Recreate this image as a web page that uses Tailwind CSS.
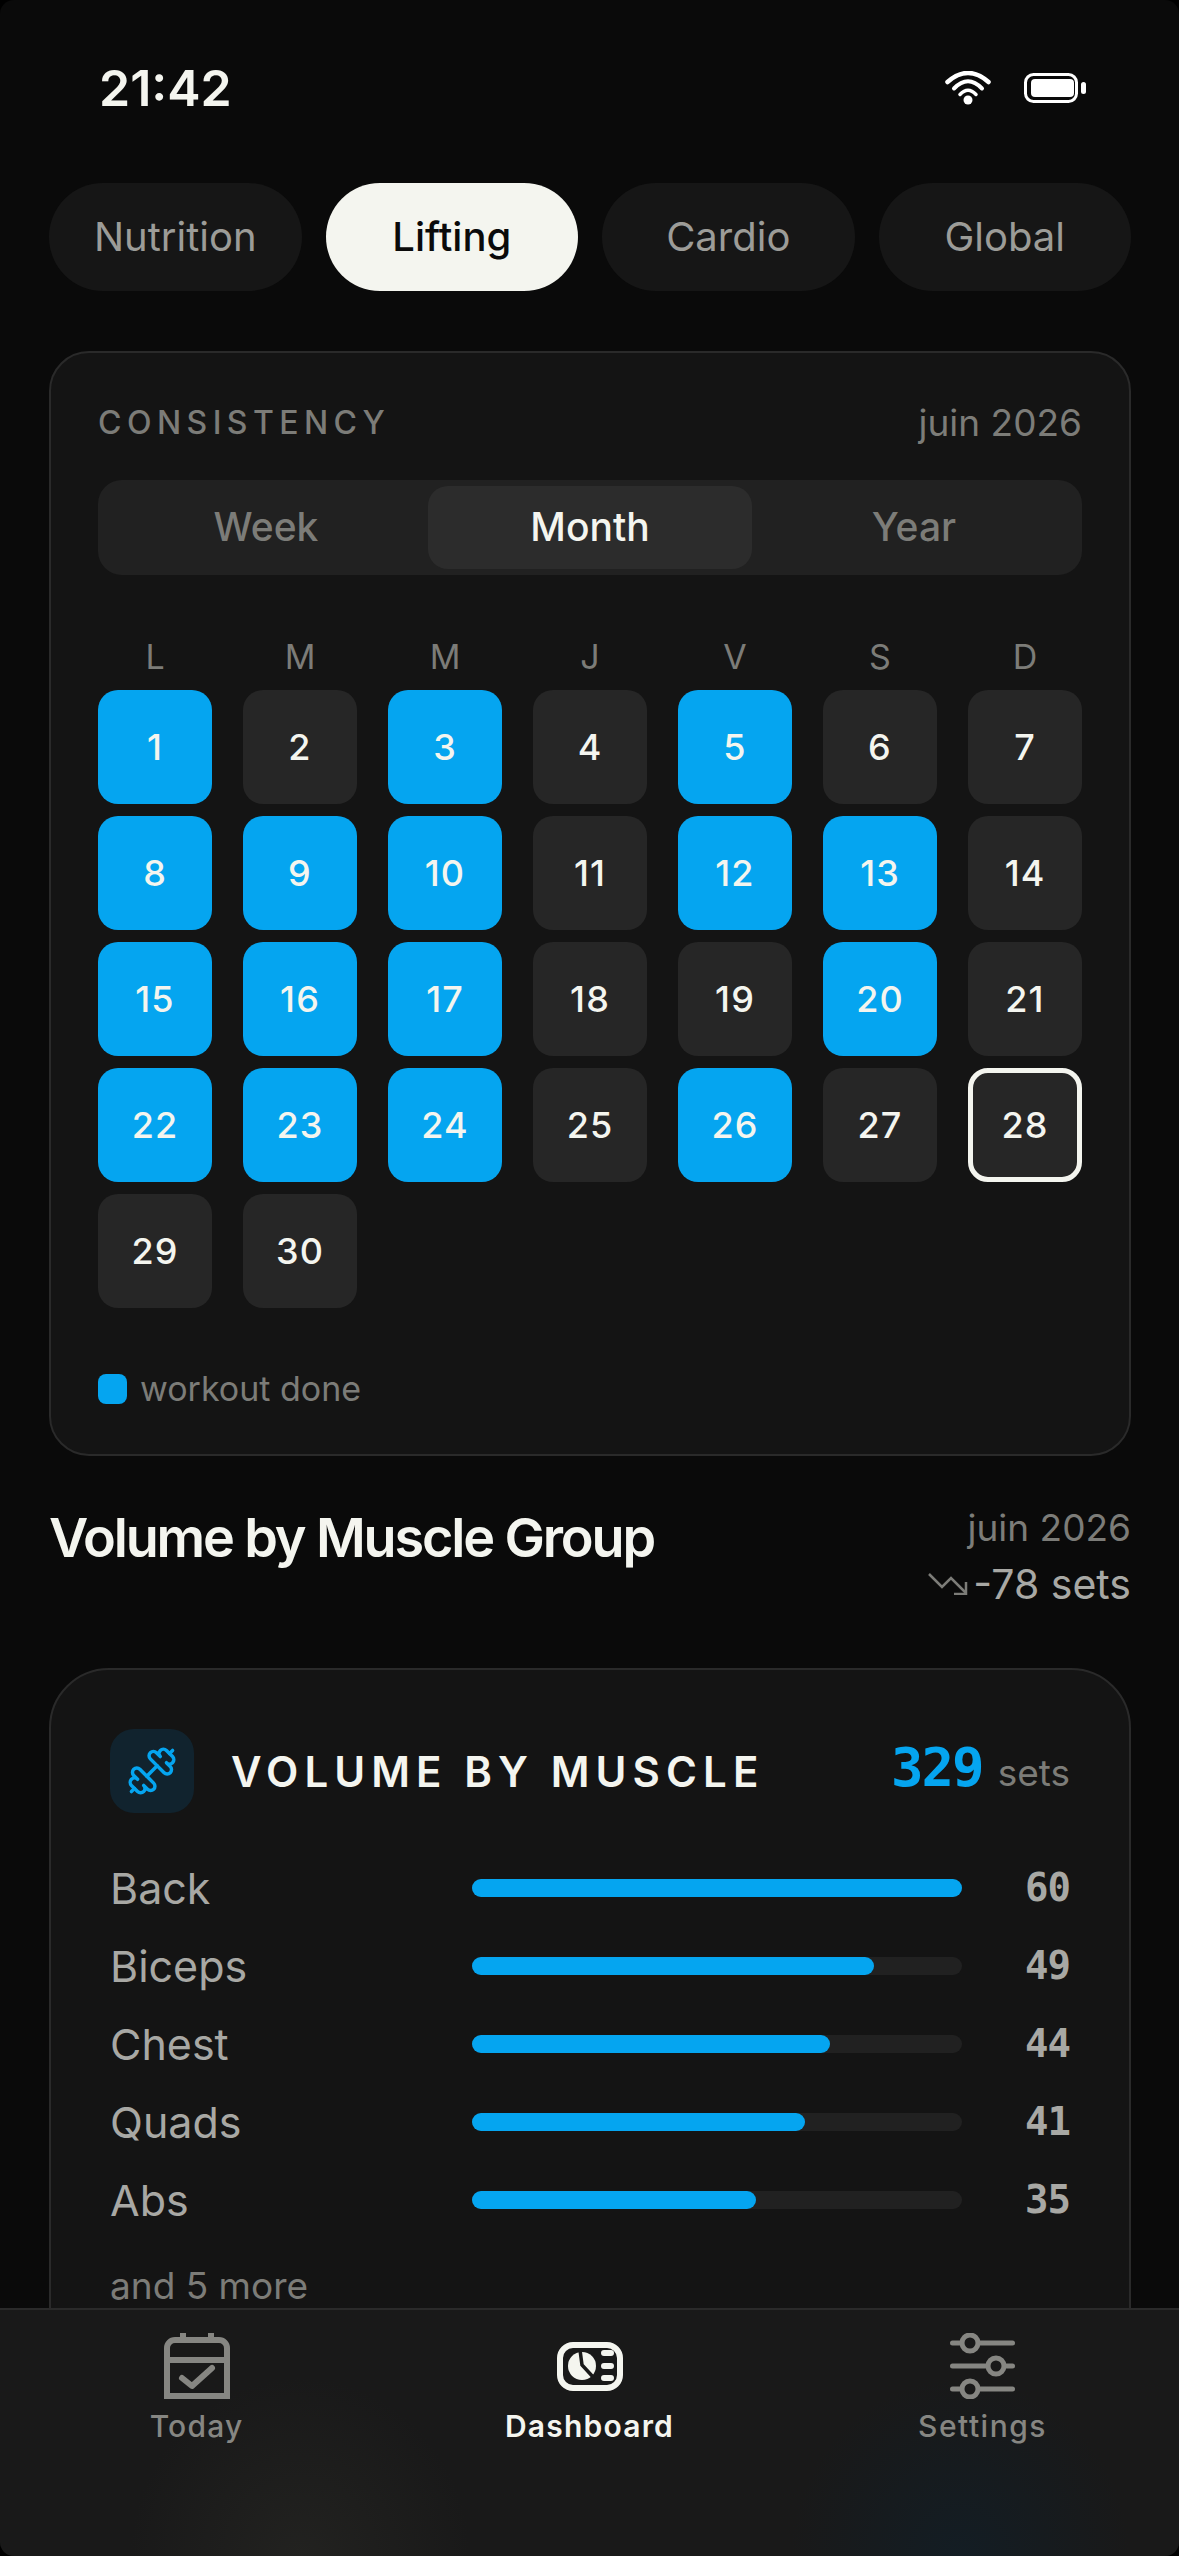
<!DOCTYPE html>
<html lang="en">
<head>
    <meta charset="UTF-8">
    <meta name="viewport" content="width=device-width, initial-scale=1.0">
    <title>Dashboard</title>
    <script src="https://cdn.jsdelivr.net/npm/@tailwindcss/browser@4"></script>
</head>
<body class="bg-black">
    <div class="relative w-[1179px] h-[2556px] overflow-hidden rounded-[14px] bg-[#0a0a0a] font-['Inter',sans-serif] text-[#f4f5ef]">
        <!-- Status bar -->
        <div class="flex items-center justify-between h-[176px] pl-[99px] pr-[93px]">
            <span class="text-[50px] font-semibold leading-none">21:42</span>
            <div class="flex items-center gap-[33px]">
                <svg width="46" height="34" viewBox="0 0 46 34" fill="none" stroke="white" stroke-linecap="round">
                    <path d="M2.5 11Q23 -7 43.5 11" stroke-width="4.5"/>
                    <path d="M9 17.5Q23 3 37 17.5" stroke-width="4"/>
                    <path d="M15 23.5Q23 15 31 23.5" stroke-width="3.5"/>
                    <circle cx="23" cy="29" r="4.5" fill="white" stroke="none"/>
                </svg>
                <svg width="62" height="30" viewBox="0 0 62 30" fill="none">
                    <rect x="1.5" y="1.5" width="51" height="27" rx="8" stroke="white" stroke-width="3"/>
                    <rect x="7" y="6" width="43" height="18" rx="4" fill="white"/>
                    <rect x="57" y="9" width="5" height="12" rx="2.5" fill="white"/>
                </svg>
            </div>
        </div>

        <div class="pl-[49px] pr-[48px]">
            <!-- Top tabs -->
            <div class="flex gap-[24px] mt-[7px]">
                <button class="flex-1 h-[108px] rounded-full bg-[#161616] text-[#9c9c98] text-[40px]">Nutrition</button>
                <button class="flex-1 h-[108px] rounded-full bg-[#f4f5ef] text-[#0a0a0a] text-[40px] font-medium">Lifting</button>
                <button class="flex-1 h-[108px] rounded-full bg-[#161616] text-[#9c9c98] text-[40px]">Cardio</button>
                <button class="flex-1 h-[108px] rounded-full bg-[#161616] text-[#9c9c98] text-[40px]">Global</button>
            </div>

            <!-- Consistency card -->
            <section class="mt-[60px] h-[1105px] rounded-[40px] border-2 border-[#2a2a2a] bg-[#141414] px-[47px] pt-[48px]">
                <div class="flex items-center justify-between h-[44px]">
                    <span class="text-[32px] font-medium tracking-[0.17em] text-[#7c7c78]">CONSISTENCY</span>
                    <span class="text-[37px] text-[#7c7c78]">juin 2026</span>
                </div>
                <div class="flex mt-[35px] h-[95px] rounded-[24px] bg-[#212121] p-[6px]">
                    <div class="flex-1 flex items-center justify-center text-[39px] font-medium text-[#7c7c78]">Week</div>
                    <div class="flex-1 flex items-center justify-center text-[39px] font-medium rounded-[20px] bg-[#2c2c2c]">Month</div>
                    <div class="flex-1 flex items-center justify-center text-[39px] font-medium text-[#7c7c78]">Year</div>
                </div>
                <div class="grid grid-cols-7 gap-x-[31px] mt-[60px] text-center text-[34px] leading-[44px] text-[#7c7c78]">
                    <span>L</span><span>M</span><span>M</span><span>J</span><span>V</span><span>S</span><span>D</span>
                </div>
                <div id="calendar" class="grid grid-cols-7 gap-x-[31px] gap-y-[12px] mt-[11px]"></div>
                <div class="flex items-center gap-[13px] mt-[55px]">
                    <span class="w-[29px] h-[30px] rounded-[8px] bg-[#05a5f0]"></span>
                    <span class="text-[34px] text-[#7c7c78]">workout done</span>
                </div>
            </section>

            <!-- Section heading -->
            <div class="flex justify-between mt-[45px] h-[167px]">
                <h2 class="text-[54px] font-semibold tracking-[-0.04em] leading-none mt-[10px]">Volume by Muscle Group</h2>
                <div class="flex flex-col items-end">
                    <span class="text-[37px] leading-[44px] mt-[5px] text-[#7c7c78]">juin 2026</span>
                    <div class="flex items-center gap-[5px] mt-[12px] text-[41px] leading-[44px] text-[#a8a8a4]">
                        <svg width="40" height="22" viewBox="0 0 40 22" fill="none" stroke="#7c7c78" stroke-width="2.5">
                            <path d="M1 1l13 13 9-9 15 15"/>
                            <path d="M38 9v12H26"/>
                        </svg>
                        <span>-78 sets</span>
                    </div>
                </div>
            </div>

            <!-- Volume card -->
            <section class="h-[800px] rounded-[60px] border-2 border-[#2a2a2a] bg-[#141414] px-[59px] pt-[59px]">
                <div class="flex items-center h-[84px]">
                    <div class="flex items-center justify-center w-[84px] h-[84px] rounded-[24px] bg-[#11232e]">
                        <svg width="52" height="52" viewBox="0 0 24 24" fill="none" stroke="#05a5f0" stroke-width="1.6" stroke-linecap="round" stroke-linejoin="round">
                            <path d="M17.596 12.768a2 2 0 1 0 2.829-2.829l-1.768-1.767a2 2 0 0 0 2.828-2.829l-2.828-2.828a2 2 0 0 0-2.829 2.828l-1.767-1.768a2 2 0 1 0-2.829 2.829z"/>
                            <path d="m2.5 21.5 1.4-1.4"/>
                            <path d="m20.1 3.9 1.4-1.4"/>
                            <path d="M5.343 21.485a2 2 0 1 0 2.829-2.828l1.767 1.768a2 2 0 1 0 2.829-2.829l-6.364-6.364a2 2 0 1 0-2.829 2.829l1.768 1.767a2 2 0 0 0-2.828 2.829z"/>
                            <path d="m9.6 14.4 4.8-4.8"/>
                        </svg>
                    </div>
                    <span class="ml-[37px] text-[42px] font-semibold tracking-[0.145em]">VOLUME BY MUSCLE</span>
                    <div class="ml-auto flex items-baseline gap-[15px]">
                        <span class="font-['DejaVu_Sans_Mono',monospace] text-[54px] font-bold tracking-[-2px] text-[#05a5f0] leading-none">329</span>
                        <span class="text-[37px] text-[#7c7c78]">sets</span>
                    </div>
                </div>
                <div id="muscles" class="flex flex-col gap-[34px] mt-[53px]"></div>
                <p class="mt-[42px] text-[37px] leading-[44px] text-[#7c7c78]">and 5 more</p>
            </section>
        </div>

        <!-- Bottom nav -->
        <nav class="absolute left-0 right-0 bottom-0 h-[248px] border-t-2 border-[#2a2a2a] bg-[#191919]">
            <div class="absolute inset-0 bg-[radial-gradient(ellipse_170px_180px_at_300px_248px,#222220,transparent)]"></div>
            <div class="absolute inset-0 bg-[radial-gradient(ellipse_170px_180px_at_960px_248px,#131d24,transparent)]"></div>
            <div class="relative grid grid-cols-3 pt-[23px]">
                <div class="flex flex-col items-center text-[#868682]">
                    <svg width="66" height="66" viewBox="0 0 66 66" fill="none" stroke="#868682" stroke-width="6">
                        <path d="M3 63V15a8 8 0 0 1 8-8h44a8 8 0 0 1 8 8v48z"/>
                        <path d="M3 27h60"/>
                        <path d="M19 0v7M47 0v7"/>
                        <path d="M18 45l10 8 20-18" stroke-linecap="round" stroke-linejoin="round"/>
                    </svg>
                    <span class="mt-[5px] text-[30px] font-medium tracking-[0.04em]">Today</span>
                </div>
                <div class="flex flex-col items-center">
                    <svg width="66" height="66" viewBox="0 0 66 66" fill="none">
                        <rect x="3" y="12" width="60" height="43" rx="13" stroke="#f4f5ef" stroke-width="6"/>
                        <circle cx="25" cy="33" r="14" fill="#f4f5ef"/>
                        <path d="M23 17l2 15 12 13" stroke="#191919" stroke-width="3.5"/>
                        <path d="M47 20h7M47 33h7M47 45h7" stroke="#f4f5ef" stroke-width="6" stroke-linecap="round"/>
                    </svg>
                    <span class="mt-[5px] text-[30px] font-semibold tracking-[0.04em]">Dashboard</span>
                </div>
                <div class="flex flex-col items-center text-[#868682]">
                    <svg width="66" height="66" viewBox="0 0 66 66" fill="none" stroke="#868682" stroke-width="5" stroke-linecap="round">
                        <path d="M2.5 10h60M2.5 33h60M2.5 56h60"/>
                        <circle cx="20" cy="10" r="8" fill="#191919"/>
                        <circle cx="46" cy="33" r="8" fill="#191919"/>
                        <circle cx="20" cy="56" r="8" fill="#191919"/>
                    </svg>
                    <span class="mt-[5px] text-[30px] font-medium tracking-[0.05em]">Settings</span>
                </div>
            </div>
        </nav>
    </div>

    <script>
        const doneDays = [1, 3, 5, 8, 9, 10, 12, 13, 15, 16, 17, 20, 22, 23, 24, 26];
        const today = 28;

        document.getElementById('calendar').innerHTML = Array.from({ length: 30 }, (_, i) => i + 1).map(day => {
            let style = 'bg-[#262626]';
            if (doneDays.includes(day)) style = 'bg-[#05a5f0]';
            if (day === today) style = 'bg-[#262626] border-[5px] border-[#f4f5ef]';
            return `<div class="flex items-center justify-center h-[114px] rounded-[20px] text-[36px] font-medium tracking-[0.03em] ${style}">${day}</div>`;
        }).join('');

        const muscles = [
            { name: 'Back', sets: 60, pct: 100 },
            { name: 'Biceps', sets: 49, pct: 82 },
            { name: 'Chest', sets: 44, pct: 73 },
            { name: 'Quads', sets: 41, pct: 68 },
            { name: 'Abs', sets: 35, pct: 58 }
        ];

        document.getElementById('muscles').innerHTML = muscles.map(m => `
            <div class="flex items-center h-[44px]">
                <span class="w-[362px] text-[43px] text-[#a8a8a4]">${m.name}</span>
                <div class="w-[490px] h-[18px] rounded-full bg-[#212121]">
                    <div class="h-full rounded-full bg-[#05a5f0]" style="width: ${m.pct}%"></div>
                </div>
                <span class="ml-auto font-['DejaVu_Sans_Mono',monospace] font-bold text-[39px] tracking-[-1px] text-[#a8a8a4]">${m.sets}</span>
            </div>
        `).join('');
    </script>
</body>
</html>
